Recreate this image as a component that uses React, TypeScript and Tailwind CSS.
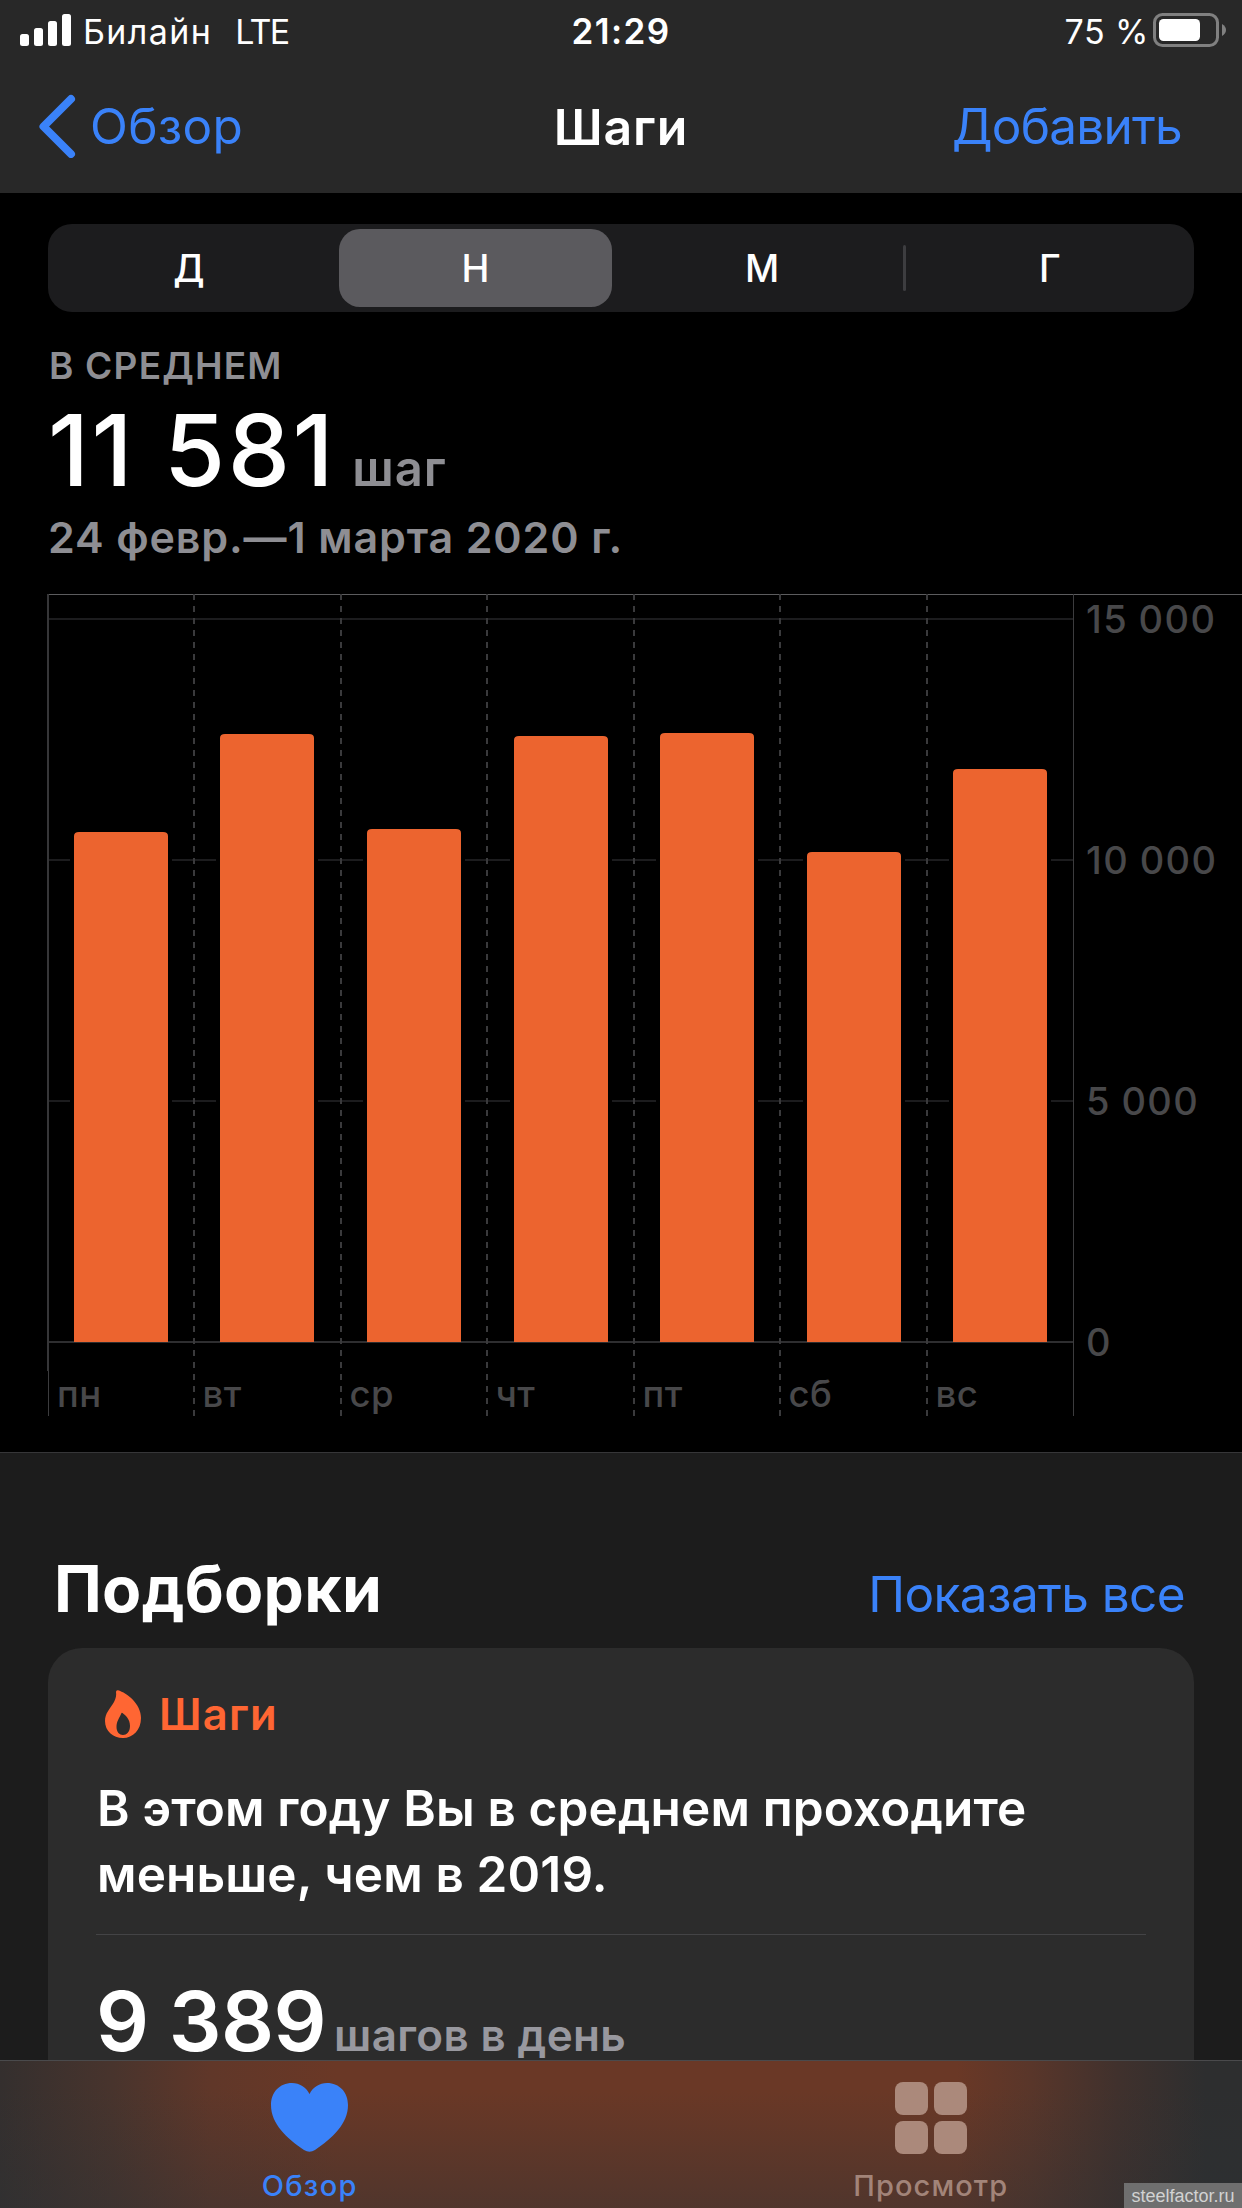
import clsx from "clsx";

// ─── Data ─────────────────────────────────────────────────────────────────────

const RANGES = ["Д", "Н", "М", "Г"];

/** top = distance from the chart's upper edge to the top of the bar */
const DAYS = [
  { label: "пн", x: 74, top: 238 },
  { label: "вт", x: 220, top: 140 },
  { label: "ср", x: 367, top: 235 },
  { label: "чт", x: 514, top: 142 },
  { label: "пт", x: 660, top: 139 },
  { label: "сб", x: 807, top: 258 },
  { label: "вс", x: 953, top: 175 },
];

const DIVIDERS = [194, 341, 487, 634, 780, 927];

const GRID = [
  { label: "15 000", y: 25 },
  { label: "10 000", y: 266 },
  { label: "5 000", y: 507 },
  { label: "0", y: 748 },
];

const BAR_WIDTH = 94;
const BASELINE = 748;

// ─── Icons ────────────────────────────────────────────────────────────────────

function SignalIcon() {
  return (
    <svg width="52" height="34" viewBox="0 0 52 34" fill="#fff">
      <rect x="0" y="20" width="9" height="12" rx="2.5" />
      <rect x="14" y="14" width="9" height="18" rx="2.5" />
      <rect x="28" y="7" width="9" height="25" rx="2.5" />
      <rect x="42" y="0" width="9" height="32" rx="2.5" />
    </svg>
  );
}

function BatteryIcon() {
  return (
    <svg width="74" height="36" viewBox="0 0 74 36">
      <rect x="1.5" y="1.5" width="63" height="31" rx="8" fill="none" stroke="#808080" strokeWidth="3" />
      <rect x="6" y="6" width="41" height="22" rx="4.5" fill="#fff" />
      <path d="M69 11 Q73 13.5 73 17 T69 23 Z" fill="#808080" />
    </svg>
  );
}

function FlameIcon() {
  return (
    <svg width="36" height="48" viewBox="0 0 36 48" fill="#ff6633">
      <path
        fillRule="evenodd"
        d="M13 .3C22 3 36 14 36 28C36 40 28 48 18 48C8 48 0 41 0 31C0 23 5 19 9 12C11 8 11.5 5 11 2Q11 0 13 .3ZM16.5 23C14.5 28 11.5 31 11.5 37C11.5 42 14.5 45 18 45C21.5 45 25 42 25 36C25 29 20.5 25.5 17.5 23Q16.8 22.5 16.5 23Z"
      />
    </svg>
  );
}

function HeartIcon() {
  return (
    <svg width="77" height="72" viewBox="0 0 77 72" fill="#3a82f9">
      <path d="M38.5 12C35 5 28.5 1 21 1C8.5 1 0 10.5 0 23C0 42 16 56.5 33 68Q38.5 71.5 44 68C61 56.5 77 42 77 23C77 10.5 68.5 1 56 1C48.5 1 42 5 38.5 12Z" />
    </svg>
  );
}

function GridIcon() {
  return (
    <svg width="72" height="72" viewBox="0 0 72 72" fill="#ab897b">
      <rect x="0" y="0" width="33" height="33" rx="8" />
      <rect x="39" y="0" width="33" height="33" rx="8" />
      <rect x="0" y="39" width="33" height="33" rx="8" />
      <rect x="39" y="39" width="33" height="33" rx="8" />
    </svg>
  );
}

// ─── Sections ─────────────────────────────────────────────────────────────────

function Header() {
  return (
    <header className="h-[193px] bg-[#282828]">
      <div className="grid h-[62px] grid-cols-[1fr_auto_1fr] items-center text-[34px] leading-none text-white">
        <div className="flex items-center pl-5">
          <SignalIcon />
          <span className="ml-[11px] pt-px tracking-[1.4px]">Билайн</span>
          <span className="ml-[23px] pt-px tracking-[-1.7px]">LTE</span>
        </div>
        <span className="pt-px text-[35px] font-semibold tracking-[1.4px]">21:29</span>
        <div className="flex items-center justify-end pr-[15px]">
          <span className="mr-[4px] pt-px tracking-[0.5px]">75 %</span>
          <BatteryIcon />
        </div>
      </div>

      <nav className="grid h-32 grid-cols-[1fr_auto_1fr] items-center text-[49.5px] leading-none text-[#3a82f9]">
        <a className="flex items-center pl-[38px]">
          <svg width="38" height="64" viewBox="0 0 38 64" fill="none" stroke="currentColor" strokeWidth="8" strokeLinecap="round" strokeLinejoin="round">
            <path d="M33 5L5.5 32.5L33 60" />
          </svg>
          <span className="ml-[14px] pt-[2px] tracking-[0.3px]">Обзор</span>
        </a>
        <h1 className="pt-px text-[50px] font-semibold tracking-[0.8px] text-white">Шаги</h1>
        <a className="pr-[60px] pt-[2px] text-right tracking-[-0.77px]">Добавить</a>
      </nav>
    </header>
  );
}

function RangePicker() {
  return (
    <div className="mx-12 mt-[31px] grid h-[88px] grid-cols-[282px_291px_282px_291px] rounded-[24px] bg-[#1c1c1e] text-[37.5px] font-medium leading-none text-white">
      {RANGES.map((range) => (
        <div key={range} className={clsx("flex items-center", range === "Н" && "px-[9px]")}>
          {range === "Г" && <span className="h-[46px] w-[3px] rounded-full bg-[#3d3d40]" />}
          <span
            className={clsx(
              "flex h-[78px] flex-1 items-center justify-center rounded-[21px] pt-[2px]",
              range === "Н" && "bg-[#5b5a5e]"
            )}
          >
            {range}
          </span>
        </div>
      ))}
    </div>
  );
}

function Summary() {
  return (
    <section className="text-[#8e8e93]">
      <p className="mt-8 pl-[49px] text-[37px] font-semibold leading-[44px] tracking-[1.2px]">В СРЕДНЕМ</p>
      <div className="mt-[7px] flex items-baseline pl-12">
        <span className="text-[99px] font-medium leading-[110px] tracking-[2.5px] text-white">11 581</span>
        <span className="ml-[16px] text-[49px] font-semibold leading-none tracking-[1px]">шаг</span>
      </div>
      <p className="mt-[7px] pl-12 text-[43px] font-semibold leading-[50px] tracking-[0.87px]">
        24 февр.—1 марта 2020 г.
      </p>
    </section>
  );
}

function StepsChart() {
  return (
    <svg className="mt-8 block font-['Inter'] font-medium" width="1242" height="858" viewBox="0 0 1242 858">
      {/* horizontal grid */}
      {GRID.map(({ label, y }) => (
        <rect key={label} x="48" y={y - 1} width="1025" height="2" fill={label === "0" ? "#2e2e30" : "#1c1c1e"} />
      ))}

      {/* frame */}
      <rect x="48" y="0" width="1194" height="1" fill="#5c5c5e" />
      <rect x="47" y="0" width="2" height="777" fill="#363638" />
      <rect x="48" y="777" width="1" height="45" fill="#3c3c3e" />
      <rect x="1073" y="0" width="1" height="822" fill="#3c3c3e" />
      {DIVIDERS.map((x) => (
        <line key={x} x1={x} x2={x} y1="0" y2="822" stroke="#3a3a3c" strokeWidth="2" strokeDasharray="6 6" />
      ))}

      {/* bars, each with a small gap cut out of the grid lines */}
      {DAYS.map(({ label, x, top }) => (
        <g key={label}>
          <rect x={x - 4} y={top} width={BAR_WIDTH + 8} height={BASELINE - top - 1} fill="#000" />
          <path
            d={`M${x} ${BASELINE}V${top + 4}Q${x} ${top} ${x + 5} ${top}H${x + BAR_WIDTH - 5}Q${x + BAR_WIDTH} ${top} ${x + BAR_WIDTH} ${top + 4}V${BASELINE}Z`}
            fill="#ec642f"
          />
        </g>
      ))}

      <g fill="#48484a" fontSize="38" letterSpacing="1.4" wordSpacing="-1">
        {GRID.map(({ label, y }) => (
          <text key={label} x="1086" y={y + 14}>{label}</text>
        ))}
      </g>
      <g fill="#48484a" fontSize="36.5" letterSpacing="0.4">
        {DAYS.map(({ label }, i) => (
          <text key={label} x={i === 0 ? 57 : DIVIDERS[i - 1] + 8.5} y="813">{label}</text>
        ))}
      </g>
    </svg>
  );
}

function Highlights() {
  return (
    <section className="h-[608px] border-t border-[#363638] bg-[#1c1c1c] pt-[97px]">
      <div className="flex items-baseline justify-between pl-[54px] pr-[57px]">
        <h2 className="text-[64px] font-bold leading-[78px] tracking-[0.3px] text-white">Подборки</h2>
        <a className="text-[49.5px] leading-none tracking-[-0.6px] text-[#3a82f9]">Показать все</a>
      </div>

      <article className="mx-12 mt-5 h-[500px] rounded-t-[34px] bg-[#2c2c2c] px-12 pt-10">
        <div className="flex items-center gap-[18px] pl-[9px]">
          <FlameIcon />
          <span className="text-[43.5px] font-semibold leading-[52px] tracking-[1.2px] text-[#ff6633]">Шаги</span>
        </div>
        <p className="mt-[35px] whitespace-nowrap pl-px text-[49.5px] font-semibold leading-[66px] tracking-[0.14px] text-white">
          В этом году Вы в среднем проходите
          <br />
          меньше, чем в 2019.
        </p>
        <div className="mt-[27px] h-px bg-[#444446]" />
        <div className="mt-[36px] flex items-baseline">
          <span className="text-[83px] font-semibold leading-[100px] tracking-[-0.6px] text-white">9 389</span>
          <span className="ml-[8px] text-[44px] font-semibold leading-none tracking-[0.35px] text-[#98989f]">
            шагов в день
          </span>
        </div>
      </article>
    </section>
  );
}

function TabBar() {
  return (
    <footer className="relative h-[148px] border-t border-[#4a4a4c] bg-[linear-gradient(90deg,#342f2e_0%,#48342d_9%,#603729_17%,#6a3826_27%,#6a3826_77%,#59362a_83%,#40312d_90%,#2d2e2f_97%)]">
      <div className="grid h-full grid-cols-2 bg-[linear-gradient(180deg,#2d323500_20%,#2d32356b_100%)] pr-px pt-[21px] text-[29px] font-medium leading-[36px]">
        <div className="flex flex-col items-center gap-[14px] pr-px text-[#3a82f9]">
          <HeartIcon />
          <span className="tracking-[1.33px]">Обзор</span>
        </div>
        <div className="flex flex-col items-center gap-[14px] text-[#a28479]">
          <GridIcon />
          <span className="tracking-[1.1px]">Просмотр</span>
        </div>
      </div>
      <span className="absolute bottom-0 right-0 flex h-[25px] w-[118px] items-center justify-center bg-[#6f6f6f] font-['Liberation_Sans'] text-[18px] leading-none text-[#d2d2d2]">
        steelfactor.ru
      </span>
    </footer>
  );
}

export default function App() {
  return (
    <div className="h-[2208px] w-[1242px] overflow-hidden bg-black font-['Inter',sans-serif]">
      {/* content scrolls on underneath the tab bar */}
      <div className="h-[2060px]">
        <Header />
        <RangePicker />
        <Summary />
        <StepsChart />
        <Highlights />
      </div>
      <TabBar />
    </div>
  );
}
